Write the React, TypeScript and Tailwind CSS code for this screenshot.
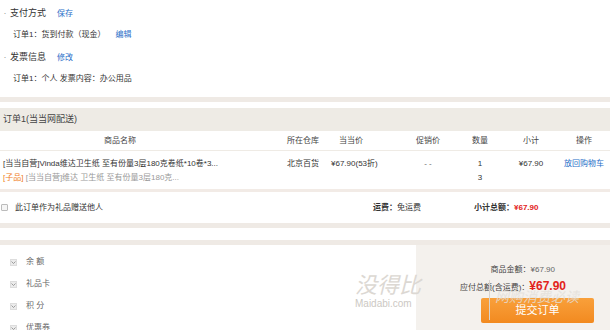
import React from 'react';

const font = "font-['Liberation_Sans','Noto_Sans_CJK_SC',sans-serif]";

const Band = () => <div className="h-[5px] bg-[#efeae5]" />;

const payItems = ['余 额', '礼品卡', '积 分', '优惠券'];

const App: React.FC = () => {
  return (
    <div className={`relative w-[610px] h-[330px] overflow-hidden bg-white text-[#333] ${font}`}>
      {/* Payment / invoice info */}
      <div className="h-[97px] pt-[6px]">
        <div className="flex items-center h-[16px] text-[9px]">
          <span className="w-[10px] text-center text-[#999]">·</span>
          <span className="text-[#333]">支付方式</span>
          <span className="ml-[11px] text-[8px] text-[#2a6fc9]">保存</span>
        </div>
        <div className="flex items-center h-[14px] mt-[6px] pl-[13px] text-[8px]">
          <span>订单1：货到付款（现金）</span>
          <span className="ml-[10px] text-[#2a6fc9]">编辑</span>
        </div>
        <div className="flex items-center h-[16px] mt-[8px] text-[9px]">
          <span className="w-[10px] text-center text-[#999]">·</span>
          <span>发票信息</span>
          <span className="ml-[11px] text-[8px] text-[#2a6fc9]">修改</span>
        </div>
        <div className="flex items-center h-[14px] mt-[6px] pl-[13px] text-[8px]">
          订单1：个人 发票内容：办公用品
        </div>
      </div>
      <Band />

      {/* Order table */}
      <div className="h-[6px]" />
      <div className="h-[23px] bg-[#eeebe5] flex items-center pl-[3px] text-[9px] text-[#444]">
        订单1(当当网配送)
      </div>
      <div className="flex h-[20px] items-center border-b border-[#efebe5] text-[8px] text-[#444]">
        <div className="w-[284px]"><div className="w-[240px] text-center">商品名称</div></div>
        <div className="w-[47px] pl-[3px]">所在仓库</div>
        <div className="w-[40px] text-center">当当价</div>
        <div className="w-[56px] ml-[29px] text-center">促销价</div>
        <div className="w-[48px] text-center">数量</div>
        <div className="w-[54px] text-center">小计</div>
        <div className="w-[52px] text-center">操作</div>
      </div>
      <div className="flex h-[41px] pt-[6px] text-[8px] leading-[14px] border-b-[3px] border-[#f2ebe6]">
        <div className="w-[284px] pl-[3px] whitespace-nowrap">
          <div>[当当自营]Vinda维达卫生纸 至有份量3层180克卷纸*10卷*3...</div>
          <div className="text-[#999]">
            <span className="text-[#f07c1a]">[子品]</span> [当当自营]维达 卫生纸 至有份量3层180克...
          </div>
        </div>
        <div className="w-[47px] pl-[3px] whitespace-nowrap">北京百货</div>
        <div className="w-[40px] whitespace-nowrap">¥67.90(53折)</div>
        <div className="w-[56px] ml-[29px] text-center text-[#666]">- -</div>
        <div className="w-[48px] text-center">
          <div>1</div>
          <div>3</div>
        </div>
        <div className="w-[54px] text-center">¥67.90</div>
        <div className="w-[52px] text-center text-[#2a6fc9] whitespace-nowrap">放回购物车</div>
      </div>
      <div className="flex h-[31px] items-center text-[8px]">
        <span className="ml-[1px] w-[7px] h-[7px] border border-[#bbb] rounded-[1px] bg-[#f5f5f5]" />
        <span className="ml-[7px]">此订单作为礼品赠送他人</span>
        <span className="ml-[270px]"><b>运费：</b>免运费</span>
        <span className="ml-[53px]"><b>小计总额：</b><b className="text-[#e2231a]">¥67.90</b></span>
      </div>
      <Band />
      <div className="h-[12px]" />
      <Band />

      {/* Bottom: payment options + total */}
      <div className="flex h-[85px]">
        <div className="w-[416px] pt-[6px]">
          {payItems.map((item) => (
            <div key={item} className="flex items-center h-[22px] pl-[10px] text-[8px] text-[#666]">
              <span className="w-[7px] h-[7px] bg-[#ebebeb] border border-[#ddd] flex items-center justify-center">
                <svg width="5" height="3" viewBox="0 0 5 3">
                  <path d="M0.5 0.5 L2.5 2.5 L4.5 0.5" fill="none" stroke="#888" strokeWidth="0.8" />
                </svg>
              </span>
              <span className="ml-[9px]">{item}</span>
            </div>
          ))}
        </div>
        <div className="w-[194px] bg-[#f4f1ed] pt-[18px] text-[8px] text-[#444]">
          <div className="text-right pr-[55px] h-[14px] leading-[14px]">
            商品金额：<span className="text-[#666]">¥67.90</span>
          </div>
          <div className="text-right pr-[44px] h-[16px] leading-[16px] mt-[1px]">
            应付总额(含运费)：<b className="text-[12px] text-[#e2231a]">¥67.90</b>
          </div>
          <div className="flex justify-end pr-[16px] mt-[4px]">
            <div className="w-[113px] h-[25px] rounded-[2px] bg-gradient-to-b from-[#f9a03a] to-[#f28a1f] flex items-center justify-center text-white text-[11px]">
              提交订单
            </div>
          </div>
        </div>
      </div>

      {/* Watermark overlay */}
      <div className="absolute left-[355px] top-[274px] pointer-events-none">
        <div className="text-[22px] leading-[24px] text-[#dcd8d3] italic">没得比</div>
        <div className="text-[10px] leading-[12px] text-[#ccc8c3]">Maidabi.com</div>
      </div>
      <div className="absolute left-[489px] top-[280px] w-px h-[40px] bg-[#d8d4cf] pointer-events-none" />
      <div className="absolute left-[495px] top-[287px] text-[14px] italic text-[#e3dfda] opacity-80 pointer-events-none whitespace-nowrap">
        网购消费必读
      </div>
    </div>
  );
};

export default App;
